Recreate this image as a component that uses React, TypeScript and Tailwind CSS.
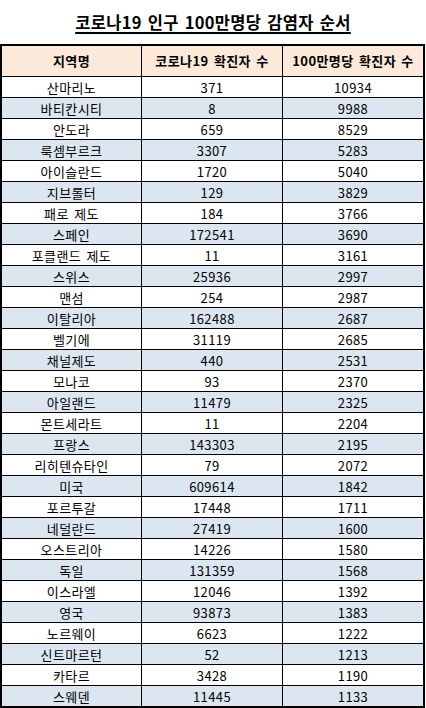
const rows: [string, string, string][] = [
  ['산마리노', '371', '10934'],
  ['바티칸시티', '8', '9988'],
  ['안도라', '659', '8529'],
  ['룩셈부르크', '3307', '5283'],
  ['아이슬란드', '1720', '5040'],
  ['지브롤터', '129', '3829'],
  ['패로 제도', '184', '3766'],
  ['스페인', '172541', '3690'],
  ['포클랜드 제도', '11', '3161'],
  ['스위스', '25936', '2997'],
  ['맨섬', '254', '2987'],
  ['이탈리아', '162488', '2687'],
  ['벨기에', '31119', '2685'],
  ['채널제도', '440', '2531'],
  ['모나코', '93', '2370'],
  ['아일랜드', '11479', '2325'],
  ['몬트세라트', '11', '2204'],
  ['프랑스', '143303', '2195'],
  ['리히텐슈타인', '79', '2072'],
  ['미국', '609614', '1842'],
  ['포르투갈', '17448', '1711'],
  ['네덜란드', '27419', '1600'],
  ['오스트리아', '14226', '1580'],
  ['독일', '131359', '1568'],
  ['이스라엘', '12046', '1392'],
  ['영국', '93873', '1383'],
  ['노르웨이', '6623', '1222'],
  ['신트마르턴', '52', '1213'],
  ['카타르', '3428', '1190'],
  ['스웨덴', '11445', '1133'],
];

export default function App() {
  return (
    <div className="w-[426px] h-[708px] bg-white text-black font-['Noto_Sans_CJK_KR','Noto_Sans',sans-serif] overflow-hidden">
      {/* title */}
      <div className="h-[44px] flex items-center justify-center pt-[1px]">
        <h1 className="text-[16.5px] font-bold underline decoration-[1.5px] underline-offset-[3px] leading-none tracking-[0.3px] [word-spacing:2px]">
          코로나19 인구 100만명당 감염자 순서
        </h1>
      </div>

      {/* table */}
      <div className="w-[425px] border-2 border-black text-[13px] tracking-[0.4px] [word-spacing:2px]">
        <div className="grid grid-cols-[140px_141px_140px] h-[30px] bg-[#fde9d9] font-bold">
          <div className="flex items-center justify-center border-r border-black">지역명</div>
          <div className="flex items-center justify-center border-r border-black">코로나19 확진자 수</div>
          <div className="flex items-center justify-center">100만명당 확진자 수</div>
        </div>
        {rows.map(([name, cases, perMillion], i) => (
          <div
            key={name}
            className={`grid grid-cols-[140px_141px_140px] h-[21px] border-t border-black ${
              i % 2 === 1 ? 'bg-[#dce6f1]' : 'bg-white'
            }`}
          >
            <div className="flex items-center justify-center border-r border-black leading-none">{name}</div>
            <div className="flex items-center justify-center border-r border-black leading-none">{cases}</div>
            <div className="flex items-center justify-center leading-none">{perMillion}</div>
          </div>
        ))}
      </div>
    </div>
  );
}
